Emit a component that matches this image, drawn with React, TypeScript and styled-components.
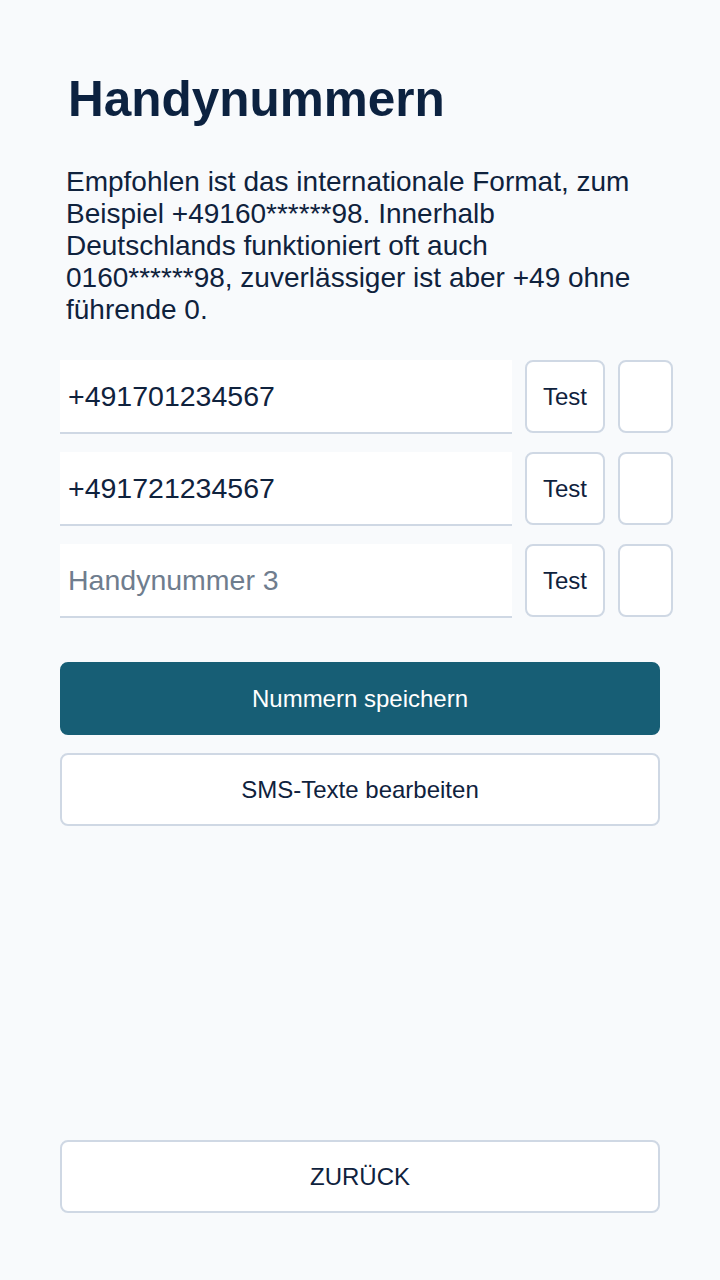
import React, { useState } from "react";
import styled, { createGlobalStyle } from "styled-components";

const GlobalStyle = createGlobalStyle`
  html, body {
    margin: 0;
    padding: 0;
    background: #f8fafc;
  }
  body {
    font-family: "Liberation Sans", Arial, sans-serif;
    color: #0f223d;
  }
`;

const Page = styled.div`
  min-height: 1280px;
  box-sizing: border-box;
  display: flex;
  flex-direction: column;
  padding: 71px 60px 67px;
`;

const Title = styled.h1`
  margin: 0 0 39px;
  padding-left: 8px;
  font-size: 49.5px;
  line-height: 56px;
  font-weight: 700;
  color: #0c2240;
`;

const Hint = styled.p`
  margin: 0 0 34px;
  padding-left: 6px;
  font-size: 28px;
  line-height: 32px;
  color: #0f223d;
`;

const Rows = styled.div`
  display: flex;
  flex-direction: column;
  gap: 18px;
`;

const Row = styled.div`
  display: grid;
  grid-template-columns: 452px 80px 55px;
  column-gap: 13px;
  height: 74px;
`;

const NumberInput = styled.input`
  box-sizing: border-box;
  width: 100%;
  height: 100%;
  margin: 0;
  padding: 0 0 0 8px;
  border: none;
  border-bottom: 2px solid #cfd8e4;
  background: #ffffff;
  font-family: inherit;
  font-size: 28.5px;
  color: #0f223d;
  outline: none;

  &::placeholder {
    color: #6f7d8e;
  }
`;

const SmallButton = styled.button`
  box-sizing: border-box;
  height: 73px;
  margin: 0;
  padding: 0;
  border: 2px solid #cfd8e4;
  border-radius: 8px;
  background: #ffffff;
  font-family: inherit;
  font-size: 24px;
  color: #0f223d;
`;

const Actions = styled.div`
  display: flex;
  flex-direction: column;
  gap: 18px;
  margin-top: 44px;
`;

const WideButton = styled.button<{ $primary?: boolean }>`
  box-sizing: border-box;
  width: 100%;
  height: 73px;
  margin: 0;
  border: 2px solid ${(p) => (p.$primary ? "#175e75" : "#cfd8e4")};
  border-radius: 8px;
  background: ${(p) => (p.$primary ? "#175e75" : "#ffffff")};
  color: ${(p) => (p.$primary ? "#ffffff" : "#0f223d")};
  font-family: inherit;
  font-size: 24px;
`;

const Spacer = styled.div`
  flex: 1;
`;

const App = () => {
  const [numbers, setNumbers] = useState(["+491701234567", "+491721234567", ""]);

  const update = (i: number, value: string) => {
    const next = [...numbers];
    next[i] = value;
    setNumbers(next);
  };

  return (
    <>
      <GlobalStyle />
      <Page>
        <Title>Handynummern</Title>
        <Hint>
          Empfohlen ist das internationale Format, zum Beispiel +49160******98.
          Innerhalb Deutschlands funktioniert oft auch 0160******98,
          zuverlässiger ist aber +49 ohne führende 0.
        </Hint>
        <Rows>
          {numbers.map((n, i) => (
            <Row key={i}>
              <NumberInput
                type="tel"
                value={n}
                placeholder={`Handynummer ${i + 1}`}
                onChange={(e) => update(i, e.target.value)}
              />
              <SmallButton>Test</SmallButton>
              <SmallButton />
            </Row>
          ))}
        </Rows>
        <Actions>
          <WideButton $primary>Nummern speichern</WideButton>
          <WideButton>SMS-Texte bearbeiten</WideButton>
        </Actions>
        <Spacer />
        <WideButton>ZURÜCK</WideButton>
      </Page>
    </>
  );
};

export default App;
